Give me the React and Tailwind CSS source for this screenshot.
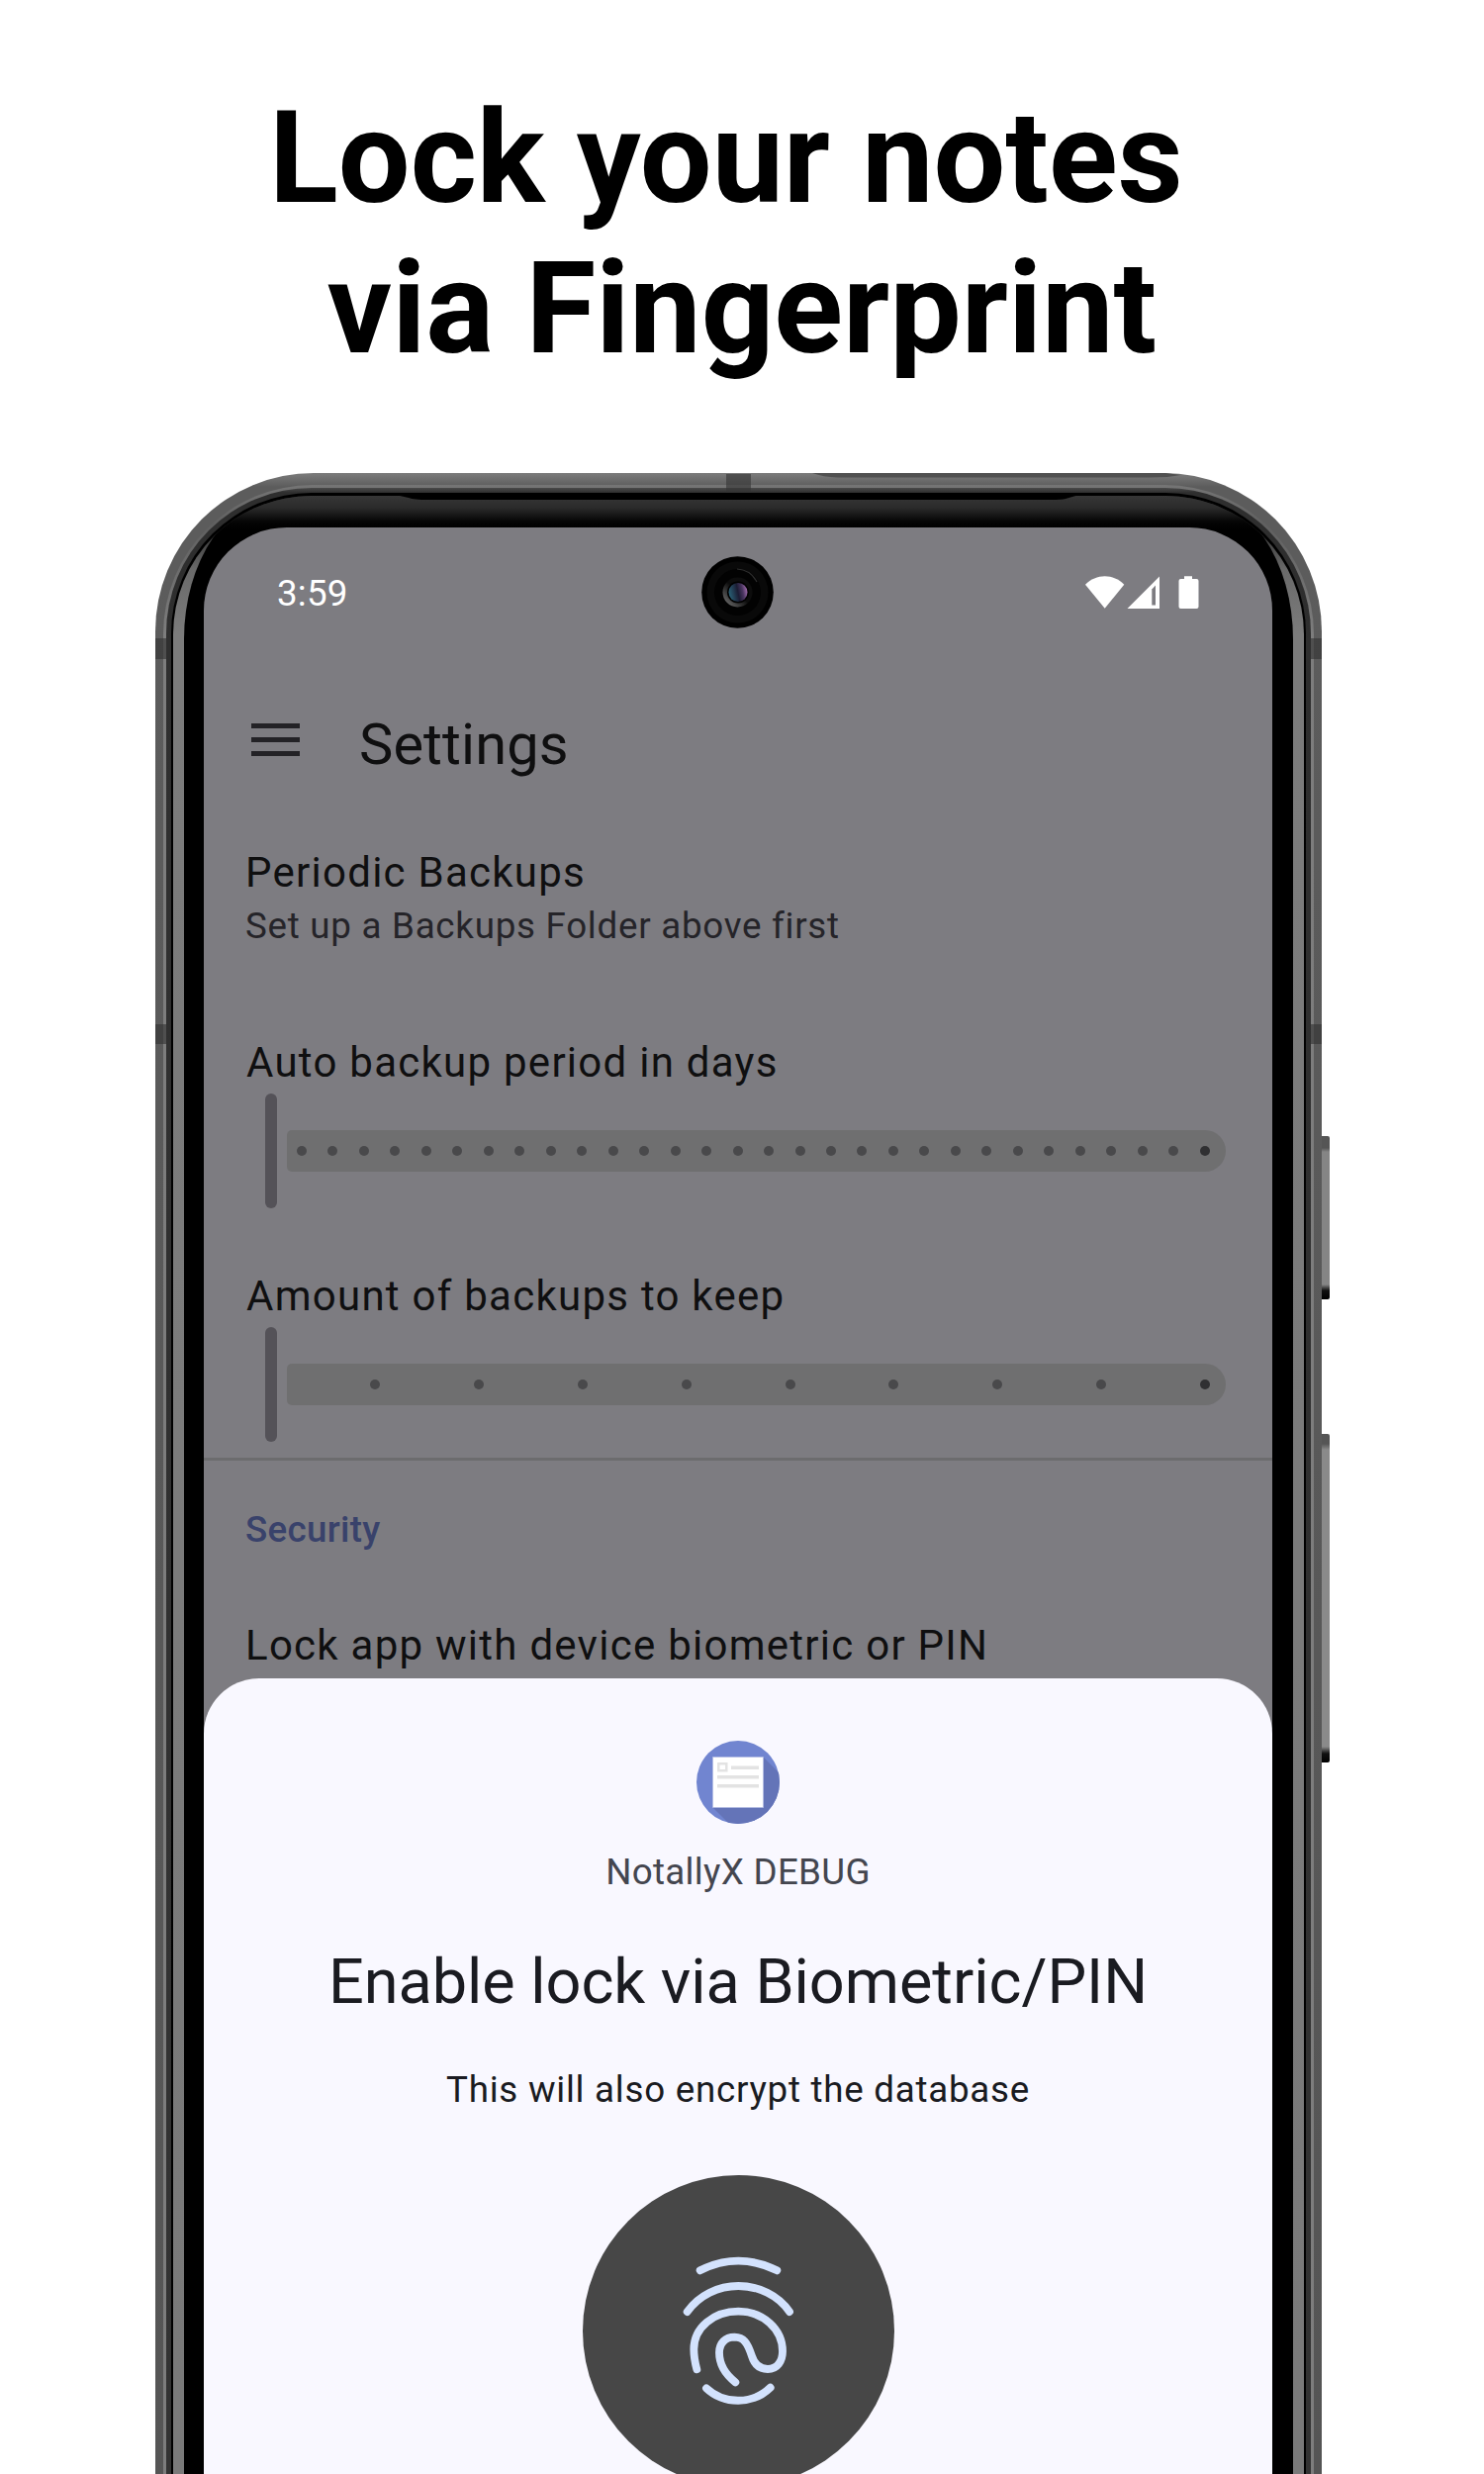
import React from "react";

function Title() {
  return (
    <h1 className="h-[478px] pt-[84px] text-center text-[129px] leading-[152px] font-bold text-black whitespace-pre">
      <span className="block">{"Lock your notes "}</span>
      <span className="block">via Fingerprint</span>
    </h1>
  );
}

function Camera() {
  return (
    <svg className="mr-[2px] mb-[1px] h-[73px] w-[73px]" viewBox="0 0 73 73">
      <defs>
        <linearGradient id="ring" x1="0" y1="1" x2="1" y2="0">
          <stop offset="0.1" stopColor="#6a6a6a" />
          <stop offset="0.5" stopColor="#0c0c0c" />
        </linearGradient>
        <linearGradient id="lens" x1="0" y1="0.6" x2="1" y2="0.4">
          <stop offset="0" stopColor="#2a6378" />
          <stop offset="0.5" stopColor="#1b1c33" />
          <stop offset="0.75" stopColor="#4a3560" />
          <stop offset="1" stopColor="#a56fb0" />
        </linearGradient>
      </defs>
      <circle cx="36.5" cy="36.5" r="36.3" fill="#000" />
      <circle cx="36.5" cy="36.5" r="31" fill="#090909" />
      <circle cx="36.5" cy="36.5" r="23.5" fill="#020202" />
      <path d="M36 13a24 24 0 0 1 20 13" fill="none" stroke="#2e2e2e" strokeWidth="1.2" />
      <circle cx="36.5" cy="36.5" r="15" fill="url(#ring)" />
      <circle cx="37" cy="36.5" r="11" fill="#000" />
      <circle cx="37" cy="36.5" r="9.5" fill="url(#lens)" />
    </svg>
  );
}

function StatusBar() {
  return (
    <div className="grid h-[132px] grid-cols-[1fr_auto_1fr] items-center pr-[74px] pl-[74px]">
      <span className="mt-[2px] text-[36.75px] leading-[44px] tracking-[0.2px] text-white">3:59</span>
      <Camera />
      <svg className="mb-[1px] h-[33px] w-[115px] justify-self-end" viewBox="0 0 115 33" fill="#fff">
        <path d="M0 8.7C11-2.7 28.500-2.700 39.300 8.700L19.700 32.700Z" />
        <path d="M42.500 33L75 .5V33Z" />
        <path d="M67.300 13.500V29.500H71V9.500Z" fill="#7d7c81" />
        <path d="M95.500 3H100V.2H108V3H112.500Q114.500 3 114.500 5V31Q114.500 33 112.500 33H96.500Q94.500 33 94.500 31V5Q94.500 3 96.500 3Z" />
      </svg>
    </div>
  );
}

function AppBar() {
  return (
    <div className="flex h-[174px] items-center pl-[48px]">
      <div className="mb-[9px] flex w-[49px] flex-col gap-[9px]">
        <i className="h-[5px] bg-[#232226]" />
        <i className="h-[5px] bg-[#232226]" />
        <i className="h-[5px] bg-[#232226]" />
      </div>
      <h2 className="ml-[60px] text-[57.75px] leading-[70px] tracking-[0.1px] text-[#0f0f10]">Settings</h2>
    </div>
  );
}

function Slider({ dots, compact }) {
  return (
    <div className="mt-[6px] ml-[20px] flex h-[116px] items-center gap-[10px]">
      <i className="h-[116px] w-[12px] rounded-full bg-[#545258]" />
      <div
        className={
          "flex h-[42px] w-[949px] items-center justify-between rounded-l-[5px] rounded-r-[21px] bg-[#6f6f70] pr-[16px] " +
          (compact ? "pl-[84px]" : "pl-[10px]")
        }
      >
        {Array.from({ length: dots }, (_, i) => (
          <i
            key={i}
            className={
              "h-[10px] w-[10px] rounded-full " + (i === dots - 1 ? "bg-[#303032]" : "bg-[#49494b]")
            }
          />
        ))}
      </div>
    </div>
  );
}

function Label({ children, className }) {
  return (
    <div className={"text-[42px] leading-[50px] tracking-[1.26px] whitespace-nowrap text-[#0f0f10] " + className}>
      {children}
    </div>
  );
}

function SettingsList() {
  return (
    <div>
      <div className="pl-[42px]">
        <Label className="mt-[18px]">Periodic Backups</Label>
        <div className="mt-[7px] text-[36.75px] leading-[44px] tracking-[0.72px] text-[#252429]">
          Set up a Backups Folder above first
        </div>
        <Label className="mt-[91px] ml-[1px]">Auto backup period in days</Label>
        <Slider dots={30} />
        <Label className="mt-[64px] ml-[1px]">Amount of backups to keep</Label>
        <Slider dots={9} compact />
      </div>
      <hr className="mt-[16px] h-[3px] border-0 bg-[#6c6c6e]" />
      <div className="pl-[42px]">
        <div className="mt-[48px] text-[36.75px] leading-[44px] font-medium tracking-[0.3px] text-[#39426b]">
          Security
        </div>
        <Label className="mt-[70px]">Lock app with device biometric or PIN</Label>
      </div>
    </div>
  );
}

function AppIcon() {
  return (
    <svg className="h-[84px] w-[84px] shrink-0" viewBox="0 0 84 84">
      <defs>
        <clipPath id="disc">
          <circle cx="42" cy="42" r="42" />
        </clipPath>
      </defs>
      <g clipPath="url(#disc)">
        <path fill="#7185d0" d="M0 0H84V84H0Z" />
        <path fill="#6474b8" d="M67.500 16.500L110 59V110H59L16.500 67.500Z" />
        <path fill="#fff" stroke="#b4bde3" strokeWidth="0.8" d="M16.500 16.500H67.500V67.500H16.500Z" />
      </g>
      <path fill="none" stroke="#e3e3e3" strokeWidth="2.500" d="M22.300 23.300H30.300V30.300H22.300Z" />
      <path fill="#e3e3e3" d="M35 25.500H63V29H35ZM21 35H63V38.500H21ZM21 44H63V47.500H21Z" />
    </svg>
  );
}

function Fingerprint() {
  return (
    <svg className="mt-[64px] h-[315px] w-[315px] shrink-0" viewBox="57 54 945 945">
      <circle cx="529.500" cy="526.500" r="472.500" fill="#474747" />
      <g fill="none" stroke="#d3e2fd" strokeWidth="23.500" strokeLinecap="round">
        <path d="M413 343Q470 314 529 314T646 343" />
        <path d="M374 468C410 418 468 390 529 390S650 418 684 468" />
        <path d="M403 643C396 617 394 600 394 582C394 515 455 467 529 467C603 467 663 520 663 588C663 618 647 642 618 642C590 642 576 622 570 603C556 560 545 546 517 545C490 545 471 563 471 592C471 630 492 660 520 682" />
        <path d="M432 700C485 750 573 750 626 698" />
      </g>
    </svg>
  );
}

function BiometricSheet() {
  return (
    <div className="mt-[8px] flex h-[804px] flex-col items-center overflow-hidden rounded-t-[56px] bg-[#f9f8ff] pt-[63px]">
      <AppIcon />
      <div className="mt-[27px] text-[36.75px] leading-[44px] tracking-[0.3px] text-[#44464f]">NotallyX DEBUG</div>
      <div className="mt-[51px] text-[63px] leading-[76px] tracking-[-0.04px] text-[#1a1b21]">
        Enable lock via Biometric/PIN
      </div>
      <div className="mt-[49px] text-[36.75px] leading-[44px] tracking-[0.73px] text-[#1a1b21]">
        This will also encrypt the database
      </div>
      <Fingerprint />
    </div>
  );
}

function Screen() {
  return (
    <div className="h-[1967px] overflow-hidden rounded-t-[84px] bg-[#7d7c81]">
      <StatusBar />
      <AppBar />
      <SettingsList />
      <BiometricSheet />
    </div>
  );
}

function FrameDetails() {
  return (
    <>
      <i className="absolute top-[167px] left-0 h-[21px] w-[16px] bg-[#303030]/60" />
      <i className="absolute top-[557px] left-0 h-[20px] w-[16px] bg-[#303030]/60" />
      <i className="absolute top-[167px] right-0 h-[21px] w-[16px] bg-[#303030]/60" />
      <i className="absolute top-[557px] right-0 h-[20px] w-[16px] bg-[#303030]/60" />
      <i className="absolute top-[1px] left-[577px] h-[19px] w-[25px] bg-[#333333]/60" />
      <svg className="absolute top-0 left-0 h-[40px] w-[1179px]" viewBox="0 0 1179 40">
        <path d="M664 0H1021L1036 2Q1025 4.500 1005 4.500H690Q675 4 664 0Z" fill="#515151" />
        <path d="M245 22.500H932L920 26Q916 27 905 27H275Q262 27 256 25Z" fill="#000" />
      </svg>
    </>
  );
}

function Phone() {
  return (
    <div className="relative w-[1179px] rounded-t-[160px] bg-[linear-gradient(to_bottom,#7c7c7c_0px,#5c5c5c_14px,#5c5c5c_100px,#555555_100%)] px-[8px] pt-[12px]">
      <div className="rounded-t-[151px] bg-[linear-gradient(to_bottom,#757575_0px,#606060_40px,#7d7d7d_150px,#7d7d7d_100%)] px-[3px] pt-[3px]">
        <div className="rounded-t-[147px] bg-[linear-gradient(to_bottom,#4a4a4a,#2e2e2e_5px,#333333_100%)] px-[5px] pt-[5px]">
          <div className="rounded-t-[142px] bg-black px-[2px] pt-[3px]">
            <div className="overflow-hidden rounded-t-[140px] bg-[linear-gradient(to_bottom,#262626_0px,#333333_35px,#6a6a6a_75px,#7c7c7c_140px,#7a7a7a_100%)] px-[11px]">
              <div className="rounded-t-[100px_145px] bg-[linear-gradient(to_bottom,#363636_0px,#2b2b2b_12px,#050505_26px,#000000_34px)] pt-[32px] pr-[21px] pl-[20px]">
                <Screen />
              </div>
            </div>
          </div>
        </div>
      </div>
      <FrameDetails />
    </div>
  );
}

function SideButtons() {
  return (
    <div className="flex flex-col">
      <i className="mt-[670px] h-[165px] w-[8px] rounded-r-[2px] bg-[linear-gradient(to_bottom,#555555_0px,#555555_12px,#858585_16px,#858585_150px,#111111_156px,#000000_100%)]" />
      <i className="mt-[136px] h-[332px] w-[8px] rounded-r-[2px] bg-[linear-gradient(to_bottom,#555555_0px,#555555_10px,#8a8a8a_16px,#8a8a8a_316px,#111111_323px,#000000_100%)]" />
    </div>
  );
}

export default function App() {
  return (
    <main className="h-[2500px] w-[1500px] overflow-hidden bg-white font-['Roboto',sans-serif]">
      <Title />
      <div className="ml-[157px] flex items-start">
        <Phone />
        <SideButtons />
      </div>
    </main>
  );
}
